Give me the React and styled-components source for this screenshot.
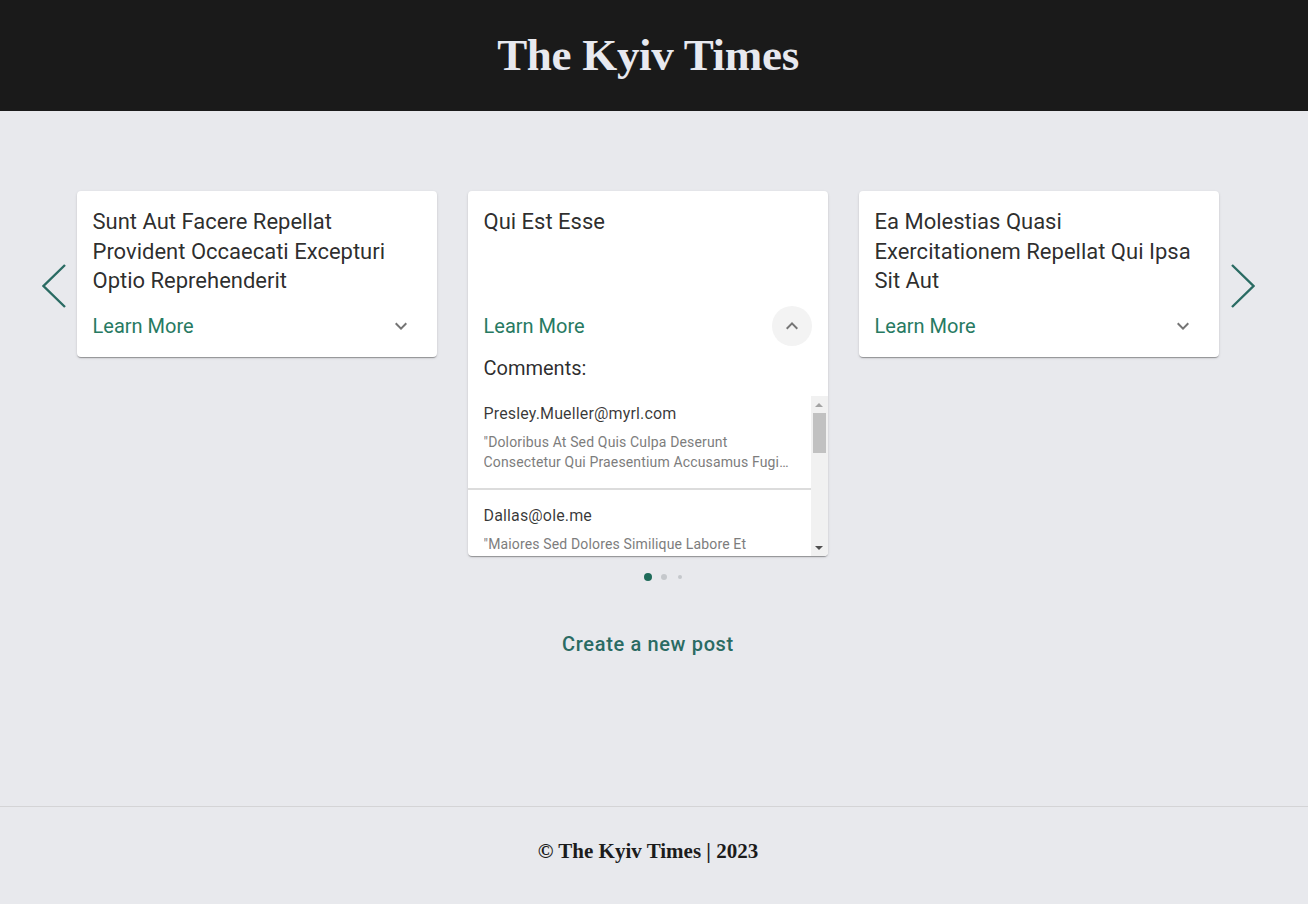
import React, { useState } from "react";
import styled, { createGlobalStyle } from "styled-components";

const GlobalStyle = createGlobalStyle`
  html, body { margin: 0; padding: 0; }
  body {
    background: #e8e9ed;
    font-family: Roboto, "Liberation Sans", Arial, sans-serif;
  }
  * { box-sizing: border-box; }
`;

const Page = styled.div`
  min-height: 100vh;
  display: flex;
  flex-direction: column;
`;

const Header = styled.header`
  height: 111px;
  background: #1a1a1a;
  display: flex;
  align-items: center;
  justify-content: center;
  padding-right: 12px;
`;

const Logo = styled.h1`
  margin: 0;
  font-family: "Liberation Serif", "Times New Roman", serif;
  font-weight: 700;
  font-size: 45px;
  color: #e8e9ef;
  letter-spacing: -0.3px;
  line-height: 1;
`;

const Main = styled.main`
  flex: 1;
  display: flex;
  flex-direction: column;
  align-items: center;
  padding: 80px 12px 0 0;
`;

const Carousel = styled.div`
  display: flex;
  align-items: flex-start;
`;

const ArrowButton = styled.button`
  width: 24px;
  height: 44px;
  margin-top: 73px;
  padding: 0;
  border: none;
  background: transparent;
  cursor: pointer;
  display: flex;
  align-items: center;
  justify-content: center;
  color: #2a6b63;
  margin-left: ${(p) => (p.$side === "right" ? "12px" : "0")};
  margin-right: ${(p) => (p.$side === "left" ? "11px" : "0")};
`;

const Cards = styled.div`
  display: flex;
  align-items: flex-start;
  gap: 31px;
`;

const Card = styled.article`
  width: 360px;
  background: #fff;
  border-radius: 4px;
  box-shadow: 0 2px 1px -1px rgba(0, 0, 0, 0.2), 0 1px 1px 0 rgba(0, 0, 0, 0.14),
    0 1px 3px 0 rgba(0, 0, 0, 0.12);
  overflow: hidden;
`;

const CardContent = styled.div`
  padding: 16px 16px 0;
`;

const Title = styled.h2`
  margin: 0;
  min-height: 89px;
  font-size: 22px;
  font-weight: 400;
  line-height: 29.6px;
  color: rgba(0, 0, 0, 0.84);
`;

const Actions = styled.div`
  display: flex;
  align-items: center;
  justify-content: space-between;
  padding: 10px 16px 11px;
`;

const LearnMore = styled.a`
  font-size: 20px;
  color: #277a62;
  text-decoration: none;
  line-height: 24px;
  cursor: pointer;
`;

const ExpandButton = styled.button`
  width: 40px;
  height: 40px;
  border-radius: 50%;
  border: none;
  padding: 0;
  display: flex;
  align-items: center;
  justify-content: center;
  cursor: pointer;
  color: #757575;
  background: ${(p) => (p.$open ? "#f3f3f3" : "transparent")};
  svg {
    transition: transform 0.2s;
    transform: rotate(${(p) => (p.$open ? "180deg" : "0deg")});
  }
`;

const CommentsHeading = styled.h3`
  margin: -4px 0 0;
  padding: 0 16px;
  font-size: 20px;
  font-weight: 400;
  line-height: 30px;
  color: rgba(0, 0, 0, 0.84);
`;

const ListFrame = styled.div`
  display: flex;
  height: 160px;
  margin-top: 13px;
`;

const CommentList = styled.ul`
  flex: 1;
  min-width: 0;
  list-style: none;
  margin: 0;
  padding: 0;
  overflow-y: auto;
  scrollbar-width: none;
`;

const ScrollTrack = styled.div`
  width: 17px;
  background: #f1f1f1;
  display: flex;
  flex-direction: column;
`;

const ScrollArrow = styled.div`
  height: 17px;
  display: flex;
  align-items: center;
  justify-content: center;
  &::before {
    content: "";
    width: 0;
    height: 0;
    border-left: 4px solid transparent;
    border-right: 4px solid transparent;
    ${(p) =>
      p.$dir === "up"
        ? `border-bottom: 4px solid #a3a3a3;`
        : `border-top: 4px solid #505050;`}
  }
`;

const ScrollRail = styled.div`
  flex: 1;
  padding: 0 2px;
`;

const ScrollThumb = styled.div`
  height: 40px;
  background: #c1c1c1;
`;

const CommentItem = styled.li`
  padding: 14px 16px 16px;
  border-bottom: 2px solid #dcdcdc;
  &:first-child {
    padding-top: 6px;
  }
  &:last-child {
    border-bottom: none;
  }
`;

const Email = styled.div`
  font-size: 16px;
  line-height: 24px;
  letter-spacing: 0.15px;
  color: rgba(0, 0, 0, 0.78);
`;

const Body = styled.p`
  margin: 6px 0 0;
  font-size: 14px;
  line-height: 20px;
  letter-spacing: 0.15px;
  color: #7d7d7d;
  display: -webkit-box;
  -webkit-line-clamp: 2;
  -webkit-box-orient: vertical;
  overflow: hidden;
`;

const Dots = styled.div`
  display: flex;
  align-items: center;
  height: 8px;
  margin-top: 17px;
`;

const DotSlot = styled.span`
  width: 16px;
  display: flex;
  justify-content: center;
`;

const Dot = styled.span`
  display: block;
  border-radius: 50%;
  width: ${(p) => p.$size}px;
  height: ${(p) => p.$size}px;
  background: ${(p) => (p.$active ? "#1f6b5a" : "#c5c8cc")};
`;

const CreateButton = styled.button`
  margin-top: 45px;
  border: none;
  background: transparent;
  font-family: Roboto, "Liberation Sans", Arial, sans-serif;
  font-size: 20px;
  font-weight: 500;
  letter-spacing: 0.65px;
  color: #2a6b63;
  padding: 6px 8px;
  line-height: 24px;
  cursor: pointer;
`;

const Footer = styled.footer`
  height: 98px;
  border-top: 1px solid #d4d4d6;
  display: flex;
  align-items: center;
  justify-content: center;
  padding: 0 12px 8px 0;
`;

const FooterText = styled.p`
  margin: 0;
  font-family: "Liberation Serif", "Times New Roman", serif;
  font-weight: 700;
  font-size: 21px;
  color: #1c1c1c;
`;

const ChevronDown = () => (
  <svg width="24" height="24" viewBox="0 0 24 24" fill="currentColor">
    <path d="M16.59 8.59 12 13.17 7.41 8.59 6 10l6 6 6-6z" />
  </svg>
);

const BigChevron = ({ dir }) => (
  <svg width="24" height="44" viewBox="0 0 24 44" fill="none" stroke="currentColor" strokeWidth="2.4">
    {dir === "left" ? <polyline points="23,1 1.5,22 23,43" /> : <polyline points="1,1 22.5,22 1,43" />}
  </svg>
);

const posts = [
  { id: 1, title: "Sunt Aut Facere Repellat Provident Occaecati Excepturi Optio Reprehenderit" },
  { id: 2, title: "Qui Est Esse" },
  { id: 3, title: "Ea Molestias Quasi Exercitationem Repellat Qui Ipsa Sit Aut" },
];

const comments = [
  {
    email: "Presley.Mueller@myrl.com",
    body: "Doloribus At Sed Quis Culpa Deserunt Consectetur Qui Praesentium Accusamus Fugiat Dicta Voluptatem Rerum Ut Voluptate Autem Voluptatem Repellendus Aspernatur Dolorem In",
  },
  {
    email: "Dallas@ole.me",
    body: "Maiores Sed Dolores Similique Labore Et Inventore Et Quasi Temporibus Esse Sunt Id Et Eos Voluptatem Aliquam Aliquid Ratione Corporis Molestiae Mollitia Quia Et Magnam Dolor",
  },
  {
    email: "Mallory_Kunze@marie.org",
    body: "Ut Voluptatem Corrupti Velit Ad Voluptatem Maiores Et Nisi Velit Vero Accusamus Maiores Voluptates Quia Aliquid Ullam Eaque",
  },
  {
    email: "Meghan_Littel@rene.us",
    body: "Sapiente Assumenda Molestiae Atque Adipisci Laborum Distinctio Aperiam Et Ab Ut Omnis Et Occaecati Aspernatur Odit Sit Rem Expedita Quas Enim Ipsam Minus",
  },
  {
    email: "Carmen_Keeling@caroline.name",
    body: "Voluptate Iusto Quis Nobis Reprehenderit Ipsum Amet Nulla Quia Quas Dolores Velit Et Non Aut Quia Necessitatibus Nostrum Quaerat Nulla Et Accusamus Nisi Facilis",
  },
];

function PostCard({ post, open, onToggle }) {
  return (
    <Card>
      <CardContent>
        <Title>{post.title}</Title>
      </CardContent>
      <Actions>
        <LearnMore>Learn More</LearnMore>
        <ExpandButton $open={open} onClick={onToggle} aria-label="show comments">
          <ChevronDown />
        </ExpandButton>
      </Actions>
      {open && (
        <>
          <CommentsHeading>Comments:</CommentsHeading>
          <ListFrame>
            <CommentList>
              {comments.map((c) => (
                <CommentItem key={c.email}>
                  <Email>{c.email}</Email>
                  <Body>"{c.body}"</Body>
                </CommentItem>
              ))}
            </CommentList>
            <ScrollTrack aria-hidden="true">
              <ScrollArrow $dir="up" />
              <ScrollRail>
                <ScrollThumb />
              </ScrollRail>
              <ScrollArrow $dir="down" />
            </ScrollTrack>
          </ListFrame>
        </>
      )}
    </Card>
  );
}

export default function App() {
  const [openId, setOpenId] = useState(2);
  const dots = [
    { size: 0 },
    { size: 0 },
    { size: 8, active: true },
    { size: 6 },
    { size: 4 },
  ];
  return (
    <Page>
      <GlobalStyle />
      <Header>
        <Logo>The Kyiv Times</Logo>
      </Header>
      <Main>
        <Carousel>
          <ArrowButton $side="left" aria-label="previous">
            <BigChevron dir="left" />
          </ArrowButton>
          <Cards>
            {posts.map((p) => (
              <PostCard
                key={p.id}
                post={p}
                open={openId === p.id}
                onToggle={() => setOpenId(openId === p.id ? null : p.id)}
              />
            ))}
          </Cards>
          <ArrowButton $side="right" aria-label="next">
            <BigChevron dir="right" />
          </ArrowButton>
        </Carousel>
        <Dots>
          {dots.map((d, i) => (
            <DotSlot key={i}>
              <Dot $size={d.size} $active={d.active} />
            </DotSlot>
          ))}
        </Dots>
        <CreateButton>Create a new post</CreateButton>
      </Main>
      <Footer>
        <FooterText>© The Kyiv Times | 2023</FooterText>
      </Footer>
    </Page>
  );
}
